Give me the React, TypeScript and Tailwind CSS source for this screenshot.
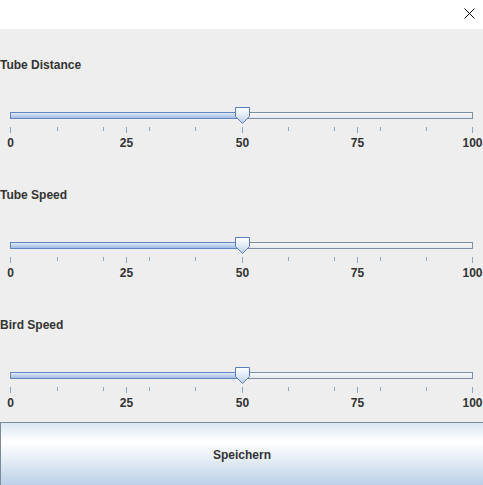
import React from "react";

const TRACK_W = 463;
const pos = (m: number) => (m <= 0 ? 0 : m >= 100 ? 462 : Math.round(m * 4.62 + 0.5));

function Slider() {
  const value = 50;
  const fillW = pos(value);
  const minor = [10, 20, 30, 40, 60, 70, 80, 90];
  const major = [0, 25, 50, 75, 100];
  return (
    <div className="flex flex-col">
      <div className="relative mx-[10px] h-[17px]" style={{ width: TRACK_W }}>
        <div className="mt-[5px] flex h-[7px]">
          <div
            className="h-full border border-[#6386c2] bg-[linear-gradient(to_bottom,#e2eaf6_0%,#c2d4ee_45%,#a3bde3_100%)]"
            style={{ width: fillW }}
          />
          <div className="h-full flex-1 border border-l-0 border-[#7d8fa3] bg-[linear-gradient(to_bottom,#f6f7f9,#e6e9ed)]" />
        </div>
        <svg
          className="absolute top-0"
          style={{ left: fillW - 7 }}
          width="15"
          height="17"
          viewBox="0 0 15 17"
        >
          <defs>
            <linearGradient id="thumbg" x1="0" y1="0" x2="0" y2="1">
              <stop offset="0" stopColor="#ffffff" />
              <stop offset="0.55" stopColor="#dde7f5" />
              <stop offset="1" stopColor="#b9cdea" />
            </linearGradient>
          </defs>
          <path
            d="M0.5 0.5 H14.5 V9.5 L7.5 16.5 L0.5 9.5 Z"
            fill="url(#thumbg)"
            stroke="#5b7cbb"
            strokeWidth="1"
          />
        </svg>
      </div>
      <div className="relative mx-[10px] mt-[3px] h-[6px]" style={{ width: TRACK_W }}>
        {minor.map((m) => (
          <div
            key={"mi" + m}
            className="absolute top-0 h-[4px] w-px bg-[#8fa6c2]"
            style={{ left: pos(m) }}
          />
        ))}
        {major.map((m) => (
          <div
            key={"ma" + m}
            className="absolute top-0 h-[6px] w-px bg-[#8fa6c2]"
            style={{ left: pos(m) }}
          />
        ))}
      </div>
      <div className="relative mx-[10px] mt-[3px] h-[15px]" style={{ width: TRACK_W }}>
        {major.map((m) => (
          <span
            key={"l" + m}
            className="absolute top-0 -translate-x-1/2 whitespace-nowrap text-[12px] font-bold leading-[15px] text-[#333333]"
            style={{ left: pos(m) + 0.5 }}
          >
            {m}
          </span>
        ))}
      </div>
    </div>
  );
}

function Section({ title, h }: { title: string; h: string }) {
  return (
    <div className={`flex flex-col ${h}`}>
      <div className="h-[15px] text-[12px] font-bold leading-[15px] text-[#333333]">
        {title}
      </div>
      <div className="mt-[34px]">
        <Slider />
      </div>
    </div>
  );
}

export default function App() {
  return (
    <div
      className="flex h-[485px] w-full flex-col overflow-hidden bg-[#eeeeee]"
      style={{ fontFamily: '"Liberation Sans", Arial, sans-serif' }}
    >
      <div className="flex h-[29px] shrink-0 items-start justify-end bg-white pr-[8px] pt-[8px]">
        <svg width="11" height="11" viewBox="0 0 11 11">
          <path d="M0.5 0.5 L10.5 10.5 M10.5 0.5 L0.5 10.5" stroke="#000" strokeWidth="1" />
        </svg>
      </div>
      <div className="flex flex-1 flex-col pt-[29px]">
        <Section title="Tube Distance" h="h-[130px]" />
        <Section title="Tube Speed" h="h-[130px]" />
        <Section title="Bird Speed" h="h-[104px]" />
        <div className="flex h-[64px] shrink-0 items-center justify-center border-l border-t border-[#7a8a99] bg-[linear-gradient(to_bottom,#dae6f3_0%,#ffffff_30%,#e8eff7_55%,#b9cfe6_100%)]">
          <span className="text-[12px] font-bold text-[#333333]">Speichern</span>
        </div>
      </div>
    </div>
  );
}
